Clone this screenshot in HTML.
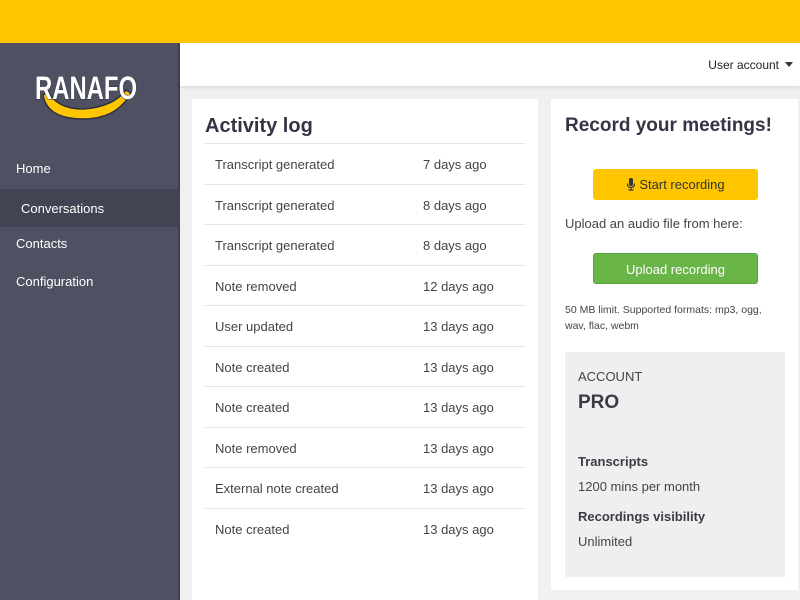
<!DOCTYPE html>
<html><head><meta charset="utf-8"><style>
*{margin:0;padding:0;box-sizing:border-box}
body{width:800px;height:600px;overflow:hidden;font-family:"Liberation Sans",sans-serif;background:#f0f0f0;position:relative;color:#3a3c48}
.top{position:absolute;left:0;top:0;width:800px;height:43px;background:#ffc600}
.side{position:absolute;left:0;top:43px;width:180px;height:557px;background:#4f5162;border-right:2px solid #3e4050}
.hdr{position:absolute;left:180px;top:43px;width:620px;height:43px;background:#fff;box-shadow:0 2px 3px rgba(0,0,0,.08)}
.hdr span{position:absolute;right:21px;top:15px;font-size:12px;color:#222}
.hdr i{position:absolute;right:7px;top:19px;border-left:4px solid transparent;border-right:4px solid transparent;border-top:5px solid #333}
.nav{position:absolute;left:16px;color:#fff;font-size:13px}
.sel{position:absolute;left:0;top:189px;width:180px;height:38px;background:#424453}
.card{position:absolute;background:#fff}
h2{font-size:20px;font-weight:bold;color:#333545}
.row{position:absolute;left:13px;width:320px;height:40.5px;border-top:1px solid #e3e3e3;font-size:13px;color:#444}
.row span{position:absolute;top:13px}
.btn{position:absolute;left:42px;width:165px;height:31px;border-radius:3px;font-size:13px;text-align:center;line-height:31px}
</style></head><body>
<div class="top"></div>
<div class="side">
<svg style="position:absolute;left:33px;top:26px" width="108" height="54" viewBox="0 0 108 54">
<path d="M10 26 Q14 50 50 50 Q84 50 98 24 L93 21 Q80 38 50 40 Q24 40 15 22Z" fill="#ffc600" stroke="#2e3040" stroke-width="1.5"/>
<text x="2" y="30" font-family="Liberation Sans" font-weight="bold" font-size="32" fill="#fff" stroke="#2e3040" stroke-width="1" paint-order="stroke" textLength="102" lengthAdjust="spacingAndGlyphs">RANAFO</text>
</svg>
</div>
<div class="sel"></div>
<div class="nav" style="top:161px">Home</div>
<div class="nav" style="top:201px;left:21px">Conversations</div>
<div class="nav" style="top:236px">Contacts</div>
<div class="nav" style="top:274px">Configuration</div>
<div class="hdr"><span>User account</span><i></i></div>
<div class="card" style="left:192px;top:99px;width:346px;height:501px">
<h2 style="position:absolute;left:13px;top:16px">Activity log</h2>
<div class="row" style="top:44px"><span style="left:10px">Transcript generated</span><span style="left:218px">7 days ago</span></div>
<div class="row" style="top:84.5px"><span style="left:10px">Transcript generated</span><span style="left:218px">8 days ago</span></div>
<div class="row" style="top:125px"><span style="left:10px">Transcript generated</span><span style="left:218px">8 days ago</span></div>
<div class="row" style="top:165.5px"><span style="left:10px">Note removed</span><span style="left:218px">12 days ago</span></div>
<div class="row" style="top:206px"><span style="left:10px">User updated</span><span style="left:218px">13 days ago</span></div>
<div class="row" style="top:246.5px"><span style="left:10px">Note created</span><span style="left:218px">13 days ago</span></div>
<div class="row" style="top:287px"><span style="left:10px">Note created</span><span style="left:218px">13 days ago</span></div>
<div class="row" style="top:327.5px"><span style="left:10px">Note removed</span><span style="left:218px">13 days ago</span></div>
<div class="row" style="top:368px"><span style="left:10px">External note created</span><span style="left:218px">13 days ago</span></div>
<div class="row" style="top:408.5px"><span style="left:10px">Note created</span><span style="left:218px">13 days ago</span></div>
</div>
<div class="card" style="left:551px;top:99px;width:247px;height:491px">
<h2 style="position:absolute;left:14px;top:16px;font-size:19px">Record your meetings!</h2>
<div class="btn" style="top:70px;background:#ffc600;color:#333">
<svg width="10" height="13" viewBox="0 0 10 13" style="vertical-align:-2px;margin-right:3px"><rect x="3" y="0" width="4" height="8" rx="2" fill="#333"/><path d="M1.5 5.5 Q1.5 9.5 5 9.5 Q8.5 9.5 8.5 5.5 M5 9.5V12 M2.5 12H7.5" stroke="#333" stroke-width="1.2" fill="none"/></svg>Start recording</div>
<div style="position:absolute;left:14px;top:117px;font-size:13px;color:#444">Upload an audio file from here:</div>
<div class="btn" style="top:154px;background:#69b548;color:#fff;border:1px solid #5aa23c">Upload recording</div>
<div style="position:absolute;left:14px;top:203px;font-size:10.5px;line-height:16px;color:#444;width:215px">50 MB limit. Supported formats: mp3, ogg, wav, flac, webm</div>
<div style="position:absolute;left:14px;top:253px;width:220px;height:225px;background:#efefef">
<div style="position:absolute;left:13px;top:17px;font-size:13px;color:#444">ACCOUNT</div>
<div style="position:absolute;left:13px;top:40px;font-size:19px;font-weight:bold">PRO</div>
<div style="position:absolute;left:13px;top:102px;font-size:13px;font-weight:bold">Transcripts</div>
<div style="position:absolute;left:13px;top:127px;font-size:13px;color:#444">1200 mins per month</div>
<div style="position:absolute;left:13px;top:157px;font-size:13px;font-weight:bold">Recordings visibility</div>
<div style="position:absolute;left:13px;top:182px;font-size:13px;color:#444">Unlimited</div>
</div>
</div>
</body></html>
